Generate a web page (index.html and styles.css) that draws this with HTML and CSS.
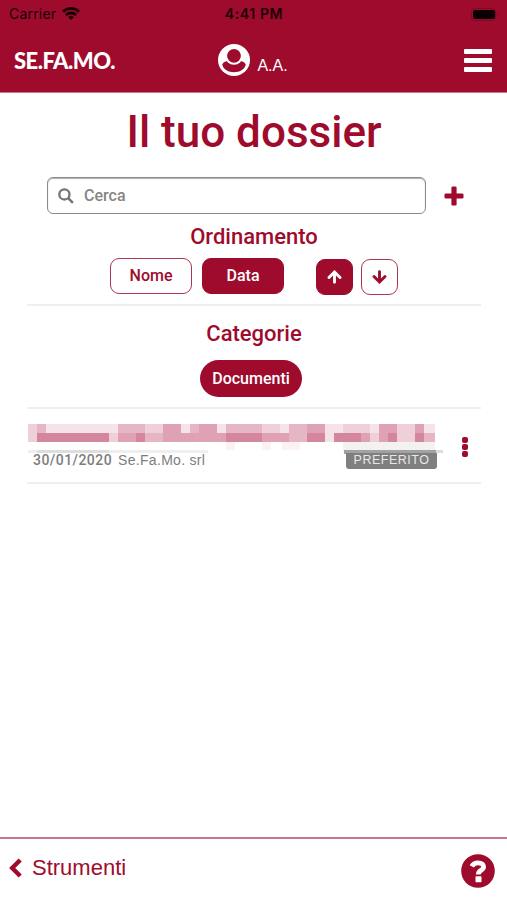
FILE: index.html
```html
<!DOCTYPE html>
<html lang="it">
<head>
  <meta charset="UTF-8">
  <meta name="viewport" content="width=device-width, initial-scale=1.0">
  <title>Il tuo dossier</title>
  <link rel="stylesheet" href="styles.css">
</head>
<body>
  <header class="header">
    <div class="status-bar">
      <div class="carrier">
        <span>Carrier</span>
        <svg width="18" height="13" viewBox="0 0 18 13" fill="none" stroke="currentColor" stroke-width="2.900">
          <path d="M1 4.6a11.6 11.6 0 0 1 16 0M3.9 8.1a7.4 7.4 0 0 1 10.2 0"/>
          <path d="M9 13L6.200 10.200a4 4 0 0 1 5.600 0z" fill="currentColor" stroke="none"/>
        </svg>
      </div>
      <span class="time">4:41 PM</span>
      <svg class="battery" width="28" height="13" viewBox="0 0 28 13">
        <rect x=".5" y=".5" width="24" height="12" rx="3.5" fill="none" stroke="#7c0a25"/>
        <rect x="2" y="2" width="22" height="9" rx="2.2" fill="#0a0003"/>
        <path d="M26 4.5v4a2.2 2.2 0 0 0 0-4z" fill="#7c0a25"/>
      </svg>
    </div>
    <nav class="nav">
      <div class="logo">SE.FA.MO.</div>
      <div class="user">
        <svg width="32" height="32" viewBox="0 0 32 32">
          <circle cx="16" cy="16" r="16" fill="#fff"/>
          <path d="M4.200 20.500C5.500 17.800 8 17 10.500 17c3.300 2.600 7.700 2.600 11 0 2.500 0 5 .8 6.300 3.500C25.500 30.800 6.500 30.800 4.200 20.500z" fill="#9e0b2d"/>
          <circle cx="16" cy="12" r="8.800" fill="#fff"/>
          <circle cx="16" cy="11.800" r="6.900" fill="#9e0b2d"/>
        </svg>
        <span>A.A.</span>
      </div>
      <div class="menu"><i></i><i></i><i></i></div>
    </nav>
  </header>

  <main class="content">
    <h1>Il tuo dossier</h1>

    <div class="search-row">
      <label class="search">
        <svg width="16" height="16" viewBox="0 0 16 16" fill="none" stroke="#757575" stroke-width="2.3">
          <circle cx="6.400" cy="6.400" r="5.100"/>
          <path d="M10.200 10.200l4.700 4.700" stroke-width="2.600"/>
        </svg>
        <input type="text" placeholder="Cerca">
      </label>
      <svg class="add" width="20" height="20" viewBox="0 0 20 20" fill="#9e0b2d">
        <rect x="7.400" y=".5" width="5.200" height="19" rx="1.300"/>
        <rect x=".5" y="7.400" width="19" height="5.200" rx="1.300"/>
      </svg>
    </div>

    <h2>Ordinamento</h2>
    <div class="sort">
      <button class="btn">Nome</button>
      <button class="btn active">Data</button>
      <button class="btn arrow first active">
        <svg width="15" height="14" viewBox="0 0 15 14"><path d="M7.500 12.300V2.500M2 7.500l5.500-5.500 5.500 5.500"/></svg>
      </button>
      <button class="btn arrow">
        <svg width="15" height="14" viewBox="0 0 15 14"><path d="M7.500 1.700v9.800M2 6.500l5.500 5.500 5.500-5.500"/></svg>
      </button>
    </div>

    <section class="categories">
      <h2>Categorie</h2>
      <button class="pill">Documenti</button>
    </section>

    <article class="document">
      <div class="document-body">
        <!-- nome del documento oscurato -->
        <svg class="censored" width="416" height="30" viewBox="0 0 416 30">
          <g fill="#f6e3e8">
            <rect x="18" width="72" height="9"/>
            <rect x="153" width="9" height="9"/>
            <rect x="189" width="9" height="9"/>
            <rect x="252" width="9" height="9"/>
            <rect x="297" width="27" height="18"/>
            <rect x="342" width="9" height="9"/>
            <rect x="396" width="11" height="9"/>
          </g>
          <g fill="#efcfd8">
            <rect width="9" height="18"/>
            <rect x="81" y="9" width="9" height="9"/>
            <rect x="117" width="18" height="9"/>
            <rect x="234" width="18" height="9"/>
            <rect x="315" width="27" height="9"/>
            <rect x="342" y="9" width="9" height="9"/>
            <rect x="369" width="18" height="18"/>
          </g>
          <g fill="#e7b6c4">
            <rect x="9" width="9" height="9"/>
            <rect x="90" width="27" height="9"/>
            <rect x="117" y="9" width="18" height="9"/>
            <rect x="162" width="9" height="9"/>
            <rect x="198" width="36" height="9"/>
            <rect x="261" width="18" height="18"/>
            <rect x="396" y="9" width="11" height="9"/>
          </g>
          <g fill="#dea2b4">
            <rect x="90" y="9" width="18" height="9"/>
            <rect x="135" width="18" height="9"/>
            <rect x="135" y="9" width="63" height="9"/>
            <rect x="171" width="18" height="9"/>
            <rect x="234" y="9" width="27" height="9"/>
            <rect x="279" width="18" height="9"/>
            <rect x="333" y="9" width="9" height="9"/>
            <rect x="351" width="18" height="18"/>
            <rect x="387" width="9" height="9"/>
          </g>
          <g fill="#d3869e">
            <rect x="9" y="9" width="72" height="9"/>
            <rect x="108" y="9" width="9" height="9"/>
            <rect x="198" y="9" width="36" height="9"/>
            <rect x="279" y="9" width="18" height="9"/>
            <rect x="306" y="9" width="27" height="9"/>
            <rect x="360" y="9" width="9" height="9"/>
            <rect x="387" y="9" width="9" height="9"/>
          </g>
          <g fill="#fcf2f4">
            <rect x="198" y="18" width="9" height="8"/>
            <rect x="234" y="18" width="9" height="8"/>
            <rect x="254" y="18" width="18" height="8"/>
          </g>
          <rect x="315" y="18" width="92" height="9" fill="#f3f1f2"/>
          <rect y="26" width="180" height="3" fill="#efefef"/>
          <rect x="9" y="26" width="72" height="3" fill="#dedede"/>
          <rect x="316" y="26" width="92" height="4" fill="#a2a2a2"/>
          <rect x="408" y="26" width="7" height="3" fill="#dcdcdc"/>
        </svg>
        <div class="meta">
          <span class="date">30/01/2020</span>
          <span class="company">Se.Fa.Mo. srl</span>
          <span class="badge">PREFERITO</span>
        </div>
      </div>
      <div class="dots"><i></i><i></i><i></i></div>
    </article>
  </main>

  <footer class="footer">
    <a class="back">
      <svg width="13" height="20" viewBox="0 0 13 20" fill="none" stroke="#9e0b2d" stroke-width="4.400">
        <path d="M11.200 2L3.200 10l8 8"/>
      </svg>
      <span>Strumenti</span>
    </a>
    <svg width="34" height="34" viewBox="0 0 34 34">
      <circle cx="17" cy="17" r="16.800" fill="#9e0b2d"/>
      <path d="M10.800 12.400c1.200-2.500 3.300-3.600 6.300-3.600 3.400 0 5.500 1.600 5.500 4 0 3.700-5.300 3.300-5.300 7.600" fill="none" stroke="#fff" stroke-width="4.800"/>
      <rect x="14.500" y="22.300" width="6" height="5.900" rx=".6" fill="#fff"/>
    </svg>
  </footer>
</body>
</html>
```
FILE: styles.css
```css
* {
  box-sizing: border-box;
  margin: 0;
  padding: 0;
}

body {
  display: flex;
  flex-direction: column;
  height: 100vh;
  background: #fff;
  color: #9e0b2d;
  font-family: Roboto, sans-serif;
}

svg {
  display: block;
  flex: none;
}

.header {
  height: 93px;
  background: #9e0b2d;
  border-bottom: 1px solid #c9758a;
}

.status-bar {
  display: grid;
  grid-template-columns: 1fr auto 1fr;
  align-items: center;
  height: 28px;
  padding: 0 8px 0 9px;
  color: #1c0007;
  font: 14px/28px Inter, sans-serif;
}

.carrier {
  display: flex;
  align-items: center;
  gap: 6px;
  letter-spacing: 0.2px;
}

.carrier svg {
  margin-top: -2px;
}

.time {
  font-weight: 600;
  letter-spacing: 0.6px;
}

.battery {
  justify-self: end;
}

.nav {
  display: grid;
  grid-template-columns: 1fr auto 1fr;
  align-items: center;
  height: 64px;
  padding: 0 15px 0 14px;
  color: #fff;
}

.logo {
  padding-top: 1px;
  font: 900 22px/24px Lato, sans-serif;
  letter-spacing: -0.5px;
}

.user {
  display: flex;
  align-items: center;
  gap: 7px;
  font: 16px/20px "Liberation Sans", sans-serif;
}

.user span {
  margin-top: 12px;
}

.menu {
  justify-self: end;
  display: grid;
  gap: 4px;
  width: 28px;
}

.menu i {
  height: 5px;
  border-radius: 1px;
  background: #fff;
}

.content {
  flex: 1;
  padding: 0 26px 0 27px;
}

h1 {
  padding-top: 13px;
  text-align: center;
  font-size: 44px;
  font-weight: 500;
  line-height: 52px;
}

.search-row {
  display: flex;
  align-items: center;
  gap: 18px;
  margin-top: 19px;
  padding-left: 20px;
}

.search {
  display: flex;
  align-items: center;
  gap: 10px;
  width: 379px;
  height: 37px;
  padding-left: 10px;
  border: 1.5px solid #8a8a8a;
  border-radius: 6px;
  box-shadow: inset 0 1px 1px #b0b0b0;
}

.search input {
  flex: 1;
  border: 0;
  outline: none;
  background: transparent;
  font: 500 16px/20px Roboto, sans-serif;
}

.search input::placeholder {
  color: #858585;
}

h2 {
  text-align: center;
  font-size: 22px;
  font-weight: 500;
  line-height: 26px;
}

.search-row + h2 {
  margin-top: 10px;
}

.sort {
  display: flex;
  justify-content: center;
  margin-top: 8px;
  padding-bottom: 9px;
  border-bottom: 2px solid #efefef;
}

.btn {
  display: flex;
  align-items: center;
  justify-content: center;
  width: 82px;
  height: 36px;
  border: 1.5px solid #ad3550;
  border-radius: 9px;
  background: #fff;
  color: #9e0b2d;
  font: 500 16px/20px Roboto, sans-serif;
}

.btn + .btn {
  margin-left: 10px;
}

.btn.active {
  background: #9e0b2d;
  border-color: #9e0b2d;
  color: #fff;
}

.btn + .btn.arrow {
  width: 37px;
  margin-left: 8px;
  margin-top: 1px;
}

.btn + .btn.arrow.first {
  margin-left: 32px;
}

.arrow path {
  fill: none;
  stroke: currentColor;
  stroke-width: 2.9;
  stroke-linecap: round;
}

.categories {
  display: flex;
  flex-direction: column;
  align-items: center;
  padding: 15px 0 10px;
  border-bottom: 2px solid #efefef;
}

.pill {
  width: 102px;
  height: 37px;
  margin: 13px 6px 0 0;
  border: 0;
  border-radius: 19px;
  background: #9e0b2d;
  color: #fff;
  font: 500 16px/20px Roboto, sans-serif;
}

.document {
  display: flex;
  justify-content: space-between;
  height: 75px;
  padding: 15px 13px 0 1px;
  border-bottom: 2px solid #efefef;
}

.meta {
  display: flex;
  width: 409px;
  margin-top: -1px;
  padding-left: 5px;
  color: #7d7d7d;
  font-size: 14px;
  line-height: 15px;
}

.date {
  font-weight: 500;
  letter-spacing: 0.45px;
}

.company {
  margin-left: 6px;
  font-family: "Liberation Sans", sans-serif;
  letter-spacing: 0.3px;
}

.badge {
  width: 91px;
  height: 16px;
  margin-left: auto;
  border-radius: 0 0 3px 3px;
  background: #7f7f7f;
  color: #e8e8e8;
  font: 12.5px/14px "Liberation Sans", sans-serif;
  letter-spacing: 0.5px;
  text-align: center;
}

.dots {
  display: grid;
  align-content: start;
  gap: 1px;
  padding-top: 13px;
}

.dots i {
  width: 6px;
  height: 6px;
  border-radius: 2px;
  background: #9e0b2d;
}

.footer {
  display: flex;
  align-items: center;
  justify-content: space-between;
  height: 63px;
  padding: 2px 12px 0 9px;
  border-top: 2px solid #c97589;
}

.back {
  display: flex;
  align-items: center;
  gap: 10px;
  margin-top: -5px;
  font: 22px/26px "Liberation Sans", sans-serif;
}
```
